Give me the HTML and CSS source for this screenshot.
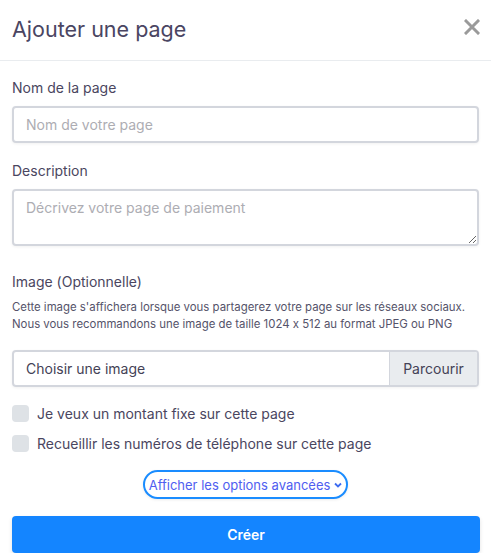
FILE: index.html
```html
<!DOCTYPE html>
<html lang="fr">
<head>
<meta charset="utf-8">
<link rel="stylesheet" href="styles.css">
</head>
<body>
<div class="modal">
  <div class="modal-header">
    <h1 class="title">Ajouter une page</h1>
    <button class="close" aria-label="Fermer">
      <svg width="16" height="16" viewBox="0 0 16 16"><path d="M2 2L14 14M14 2L2 14" stroke="#9a9a9a" stroke-width="3" stroke-linecap="square"/></svg>
    </button>
  </div>
  <form class="modal-body">
    <label class="label first">Nom de la page</label>
    <input class="field" type="text" placeholder="Nom de votre page">
    <label class="label">Description</label>
    <textarea class="field area" placeholder="Décrivez votre page de paiement"></textarea>
    <label class="label label-img">Image (Optionnelle)</label>
    <p class="help">Cette image s'affichera lorsque vous partagerez votre page sur les réseaux sociaux.<br>Nous vous recommandons une image de taille 1024 x 512 au format JPEG ou PNG</p>
    <div class="file">
      <span class="file-text">Choisir une image</span>
      <span class="file-btn">Parcourir</span>
    </div>
    <div class="check check-first"><span class="box"></span><span>Je veux un montant fixe sur cette page</span></div>
    <div class="check"><span class="box"></span><span>Recueillir les numéros de téléphone sur cette page</span></div>
    <div class="adv-row">
      <button type="button" class="adv">Afficher les options avancées
        <svg width="8" height="6" viewBox="0 0 8 6"><path d="M1 1.5L4 4.5L7 1.5" stroke="#3d6cf0" stroke-width="1.8" fill="none"/></svg>
      </button>
    </div>
    <button type="button" class="submit">Créer</button>
  </form>
</div>
</body>
</html>
```
FILE: styles.css
```css
* { box-sizing: border-box; }
html, body { margin: 0; padding: 0; background: #fff; }
body { font-family: Inter, "Noto Sans", sans-serif; color: #4a4660; font-feature-settings: "calt" 0; }
.modal { width: 491px; }
.modal-header {
  height: 61px;
  border-bottom: 1px solid #e9ecef;
  display: flex;
  align-items: center;
  justify-content: space-between;
  padding: 0 11px 3px 12px;
}
.title { margin: 0; font-size: 21.5px; font-weight: 400; color: #4a4562; }
.close { border: 0; background: none; padding: 0; display: flex; margin-top: -3px; }
.modal-body { padding: 0 12px; display: flex; flex-direction: column; }
.label { display: block; font-size: 14px; line-height: 20px; color: #4a4660; margin-top: 18px; margin-bottom: 8px; }
.label.first { margin-top: 17px; }
.label.label-img { margin-top: 26px; margin-bottom: 7px; }
.field {
  width: 100%;
  height: 37px;
  border: 2px solid #d3d6dd;
  border-radius: 4px;
  box-shadow: 0 1px 3px rgba(0,0,0,0.06);
  padding: 0 12px;
  font-family: inherit;
  font-size: 14px;
  color: #4a4660;
  outline: none;
}
.field::placeholder { color: #adadb3; }
.area { height: 57px; padding-top: 8px; resize: vertical; display: block; }
.help { margin: 0; font-size: 11.4px; line-height: 17px; color: #55536a; white-space: nowrap; }
.file {
  margin-top: 17px;
  height: 37px;
  display: flex;
  border: 2px solid #d3d6dd;
  border-radius: 4px;
  overflow: hidden;
  box-shadow: 0 1px 3px rgba(0,0,0,0.06);
  font-size: 14px;
}
.file-text { flex: 1; display: flex; align-items: center; padding-left: 12px; color: #444256; }
.file-btn { width: 88px; background: #e9ecef; border-left: 1px solid #d3d6dd; display: flex; align-items: center; justify-content: center; color: #444256; }
.check { display: flex; align-items: center; gap: 8px; font-size: 14px; color: #4a4660; height: 20px; }
.check-first { margin-top: 16px; }
.check + .check { margin-top: 10px; }
.box { width: 17px; height: 17px; border-radius: 4px; background: #dee2e6; flex: none; }
.adv-row { display: flex; justify-content: center; margin-top: 17px; }
.adv {
  height: 29px;
  width: 205px;
  border: 2px solid #1a8cff;
  border-radius: 15px;
  background: #fff;
  color: #4f5ef0;
  font-family: inherit;
  font-size: 13px;
  display: flex;
  align-items: center;
  justify-content: center;
  gap: 4px;
  padding: 0;
  box-shadow: 0 1px 3px rgba(0,0,0,0.08);
}
.submit {
  margin-top: 17px;
  height: 37px;
  width: 468px;
  border: 0;
  border-radius: 4px;
  background: #1485ff;
  color: #fff;
  font-family: inherit;
  font-size: 14px;
  font-weight: 600;
  box-shadow: 0 2px 4px rgba(0,0,0,0.12);
}
```
